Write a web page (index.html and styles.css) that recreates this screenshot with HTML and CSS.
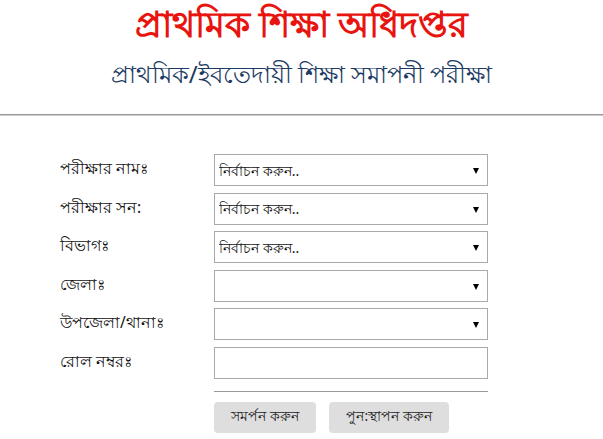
FILE: index.html
```html
<!DOCTYPE html>
<html lang="bn">
<head>
<meta charset="utf-8">
<title>প্রাথমিক শিক্ষা অধিদপ্তর</title>
<link rel="stylesheet" href="styles.css">
</head>
<body>
<header class="header">
  <h1 class="title">প্রাথমিক শিক্ষা অধিদপ্তর</h1>
  <h2 class="subtitle">প্রাথমিক/ইবতেদায়ী শিক্ষা সমাপনী পরীক্ষা</h2>
</header>
<hr class="divider">
<form class="form">
  <div class="row">
    <label class="label">পরীক্ষার নামঃ</label>
    <div class="select-wrap"><select class="select"><option>নির্বাচন করুন..</option></select></div>
  </div>
  <div class="row">
    <label class="label">পরীক্ষার সন:</label>
    <div class="select-wrap"><select class="select"><option>নির্বাচন করুন..</option></select></div>
  </div>
  <div class="row">
    <label class="label">বিভাগঃ</label>
    <div class="select-wrap"><select class="select"><option>নির্বাচন করুন..</option></select></div>
  </div>
  <div class="row">
    <label class="label">জেলাঃ</label>
    <div class="select-wrap"><select class="select"><option></option></select></div>
  </div>
  <div class="row">
    <label class="label">উপজেলা/থানাঃ</label>
    <div class="select-wrap"><select class="select"><option></option></select></div>
  </div>
  <div class="row">
    <label class="label">রোল নম্বরঃ</label>
    <input class="input" type="text">
  </div>
  <div class="actions">
    <div class="rule"></div>
    <div class="buttons">
      <button type="button" class="btn btn-submit">সমর্পন করুন</button>
      <button type="button" class="btn btn-reset">পুন:স্থাপন করুন</button>
    </div>
  </div>
</form>
</body>
</html>
```
FILE: styles.css
```css
html, body {
  margin: 0;
  padding: 0;
  background: #fff;
}
body {
  font-family: "Noto Sans", "DejaVu Sans", sans-serif;
  color: #111;
}
.header {
  text-align: center;
  padding-top: 2px;
  height: 110px;
  box-sizing: border-box;
}
.title {
  margin: 0;
  font-size: 36px;
  font-weight: bold;
  color: #e8140f;
  line-height: 44px;
}
.subtitle {
  margin: 9px 0 0;
  font-size: 24px;
  font-weight: normal;
  color: #1b3b63;
  line-height: 38px;
}
.divider {
  margin: 4px 0 0;
  border: 0;
  border-top: 1px solid #999;
  border-bottom: 1px solid #ccc;
  height: 0;
}
.form {
  padding: 38px 0 0 60px;
  display: flex;
  flex-direction: column;
  gap: 6.5px;
}
.row {
  display: flex;
  align-items: center;
  height: 32px;
}
.label {
  width: 154px;
  font-size: 15.5px;
  color: #111;
}
.select-wrap {
  position: relative;
  width: 274px;
  height: 32px;
}
.select-wrap::after {
  content: "";
  position: absolute;
  right: 9px;
  top: 14px;
  border-left: 3.5px solid transparent;
  border-right: 3.5px solid transparent;
  border-top: 6px solid #000;
  pointer-events: none;
}
.select {
  appearance: none;
  -webkit-appearance: none;
  width: 100%;
  height: 32px;
  box-sizing: border-box;
  border: 1px solid #a9a9a9;
  border-radius: 0;
  background: #fff;
  padding: 0 4px;
  font-family: inherit;
  font-size: 14px;
  color: #111;
}
.input {
  width: 274px;
  height: 32px;
  box-sizing: border-box;
  border: 1px solid #a9a9a9;
  border-radius: 0;
  padding: 0 4px;
  font-family: inherit;
  font-size: 14px;
}
.actions {
  margin-left: 154px;
  width: 274px;
  padding-top: 6px;
}
.rule {
  height: 1px;
  background: #999;
}
.buttons {
  display: flex;
  gap: 13px;
  margin-top: 10px;
}
.btn {
  height: 31px;
  border: 0;
  border-radius: 4px;
  background: #dedede;
  font-family: inherit;
  font-size: 13.5px;
  color: #222;
  padding: 0;
}
.btn-submit { width: 102px; }
.btn-reset { width: 120px; }
```
